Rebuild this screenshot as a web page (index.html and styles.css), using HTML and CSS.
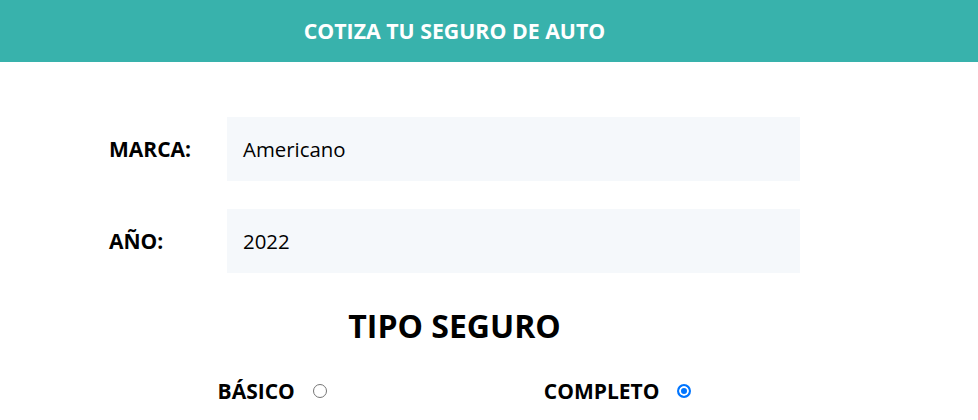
FILE: index.html
```html
<!DOCTYPE html>
<html lang="es">
<head>
<meta charset="utf-8">
<link rel="stylesheet" href="styles.css">
</head>
<body>
<header class="header">
  <div class="wrap"><h1 class="title">COTIZA TU SEGURO DE AUTO</h1></div>
</header>
<main class="wrap form">
  <div class="field">
    <label class="label">MARCA:</label>
    <div class="input">Americano</div>
  </div>
  <div class="field">
    <label class="label">AÑO:</label>
    <div class="input">2022</div>
  </div>
  <h2 class="subtitle">TIPO SEGURO</h2>
  <div class="options">
    <label class="option">BÁSICO <span class="radio"></span></label>
    <label class="option">COMPLETO <span class="radio checked"></span></label>
  </div>
</main>
</body>
</html>
```
FILE: styles.css
```css
* { box-sizing: border-box; }
html, body { margin: 0; padding: 0; background: #fff; }
body { font-family: "Open Sans", "Noto Sans", sans-serif; color: #000; }
.header { background: #38b2ac; height: 62px; display: flex; align-items: center; }
.wrap { width: 691px; margin-left: 109px; }
.title { margin: 0; color: #fff; font-size: 21.3px; font-weight: 700; text-align: center; line-height: 1; }
.form { padding-top: 55px; }
.field { display: flex; align-items: center; margin-bottom: 28px; }
.label { width: 118px; font-weight: 700; font-size: 21px; }
.input { flex: 1; height: 64px; background: #f5f8fb; display: flex; align-items: center; padding-left: 16px; font-size: 20.4px; }
.field + .field { margin-bottom: 0; }
.subtitle { margin: 32px 0 0; text-align: center; font-size: 32px; font-weight: 700; line-height: 1.3; }
.options { display: flex; justify-content: space-around; margin-top: 30px; }
.option { display: flex; align-items: center; font-weight: 700; font-size: 21px; gap: 18px; }
.radio { width: 14px; height: 14px; border-radius: 50%; border: 1px solid #767676; background: #fff; display: inline-block; }
.radio.checked { border: 2px solid #0075ff; box-shadow: inset 0 0 0 2px #fff; background: #0075ff; }
```
